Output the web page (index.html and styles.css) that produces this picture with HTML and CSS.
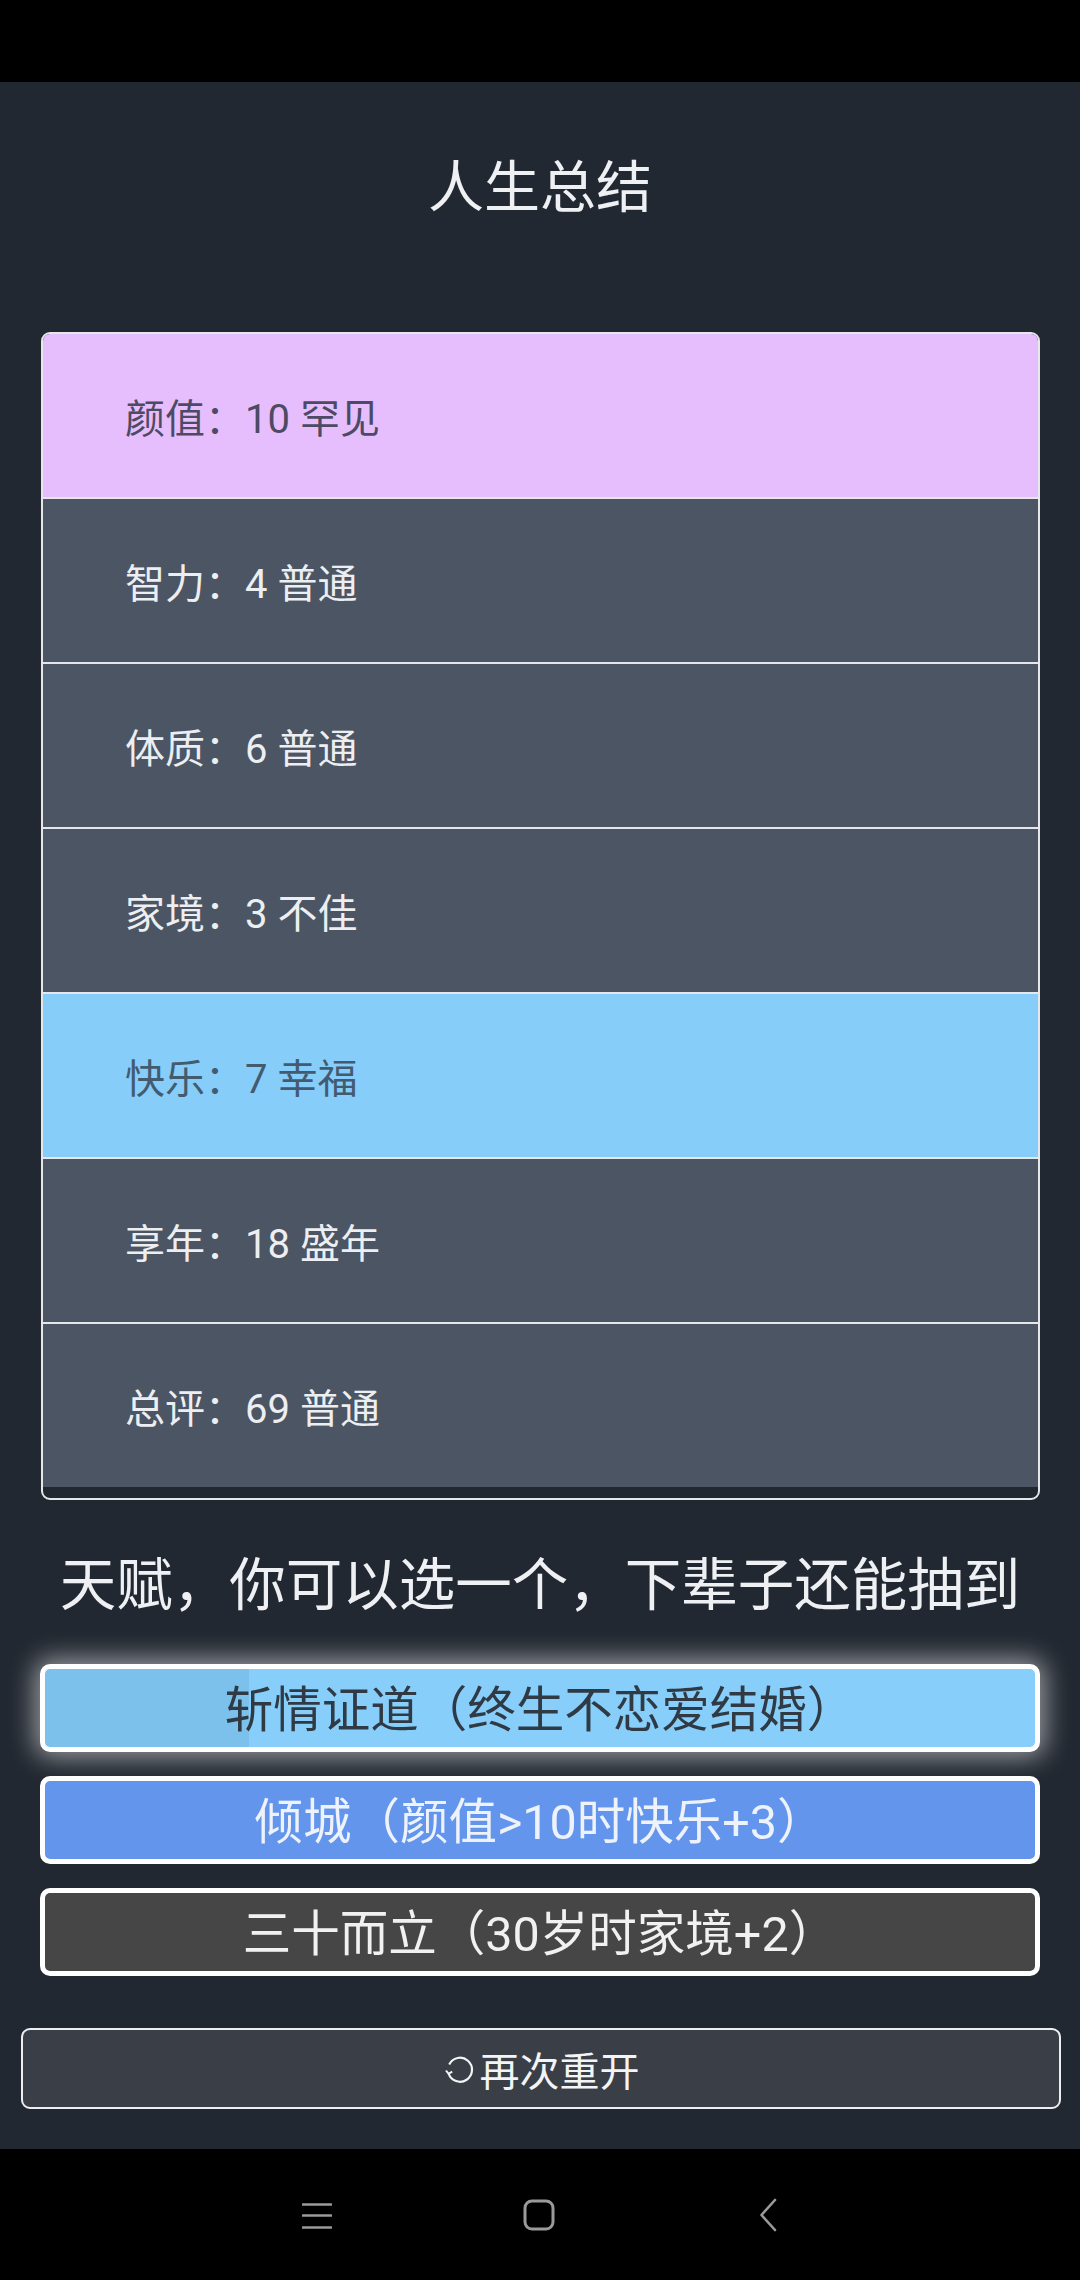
FILE: index.html
```html
<!DOCTYPE html>
<html lang="zh">
<head>
<meta charset="utf-8">
<title>人生总结</title>
<link rel="stylesheet" href="styles.css">
</head>
<body>
<div class="statusbar"></div>
<main class="main">
  <h1 class="title">人生总结</h1>
  <div class="summary">
    <div class="row row-purple">颜值：10 罕见</div>
    <div class="row">智力：4 普通</div>
    <div class="row">体质：6 普通</div>
    <div class="row">家境：3 不佳</div>
    <div class="row row-blue">快乐：7 幸福</div>
    <div class="row">享年：18 盛年</div>
    <div class="row row-last">总评：69 普通</div>
  </div>
  <h2 class="heading">天赋，你可以选一个，下辈子还能抽到</h2>
  <div class="talents">
    <div class="talent talent-sky selected"><span class="progress" style="width:204px"></span><span class="label">斩情证道（终生不恋爱结婚）</span></div>
    <div class="talent talent-cornflower"><span class="label">倾城（颜值&gt;10时快乐+3）</span></div>
    <div class="talent talent-gray"><span class="label">三十而立（30岁时家境+2）</span></div>
  </div>
  <button class="restart"><svg class="restart-icon" width="34" height="34" viewBox="0 0 34 34"><path d="M5.6 20.5 A12 12 0 1 0 6.2 11.5" fill="none" stroke="#f3f4f6" stroke-width="2.2"/><path d="M3 17.5 L5.6 20.8 L9.2 18.6" fill="none" stroke="#f3f4f6" stroke-width="2"/></svg><span>再次重开</span></button>
</main>
<nav class="navbar">
  <svg class="nav-menu" width="30" height="28" viewBox="0 0 30 28"><path d="M1 2.5H29M1 13.5H29M1 25.5H29" stroke="#9a9a9a" stroke-width="2.6" stroke-linecap="round"/></svg>
  <svg class="nav-home" width="32" height="32" viewBox="0 0 32 32"><rect x="2" y="2" width="28" height="28" rx="7" fill="none" stroke="#9a9a9a" stroke-width="3"/></svg>
  <svg class="nav-back" width="18" height="34" viewBox="0 0 18 34"><path d="M16 2 L2.5 17 L16 32" fill="none" stroke="#9a9a9a" stroke-width="2.6" stroke-linecap="round" stroke-linejoin="round"/></svg>
</nav>
</body>
</html>
```
FILE: styles.css
```css
* { box-sizing: border-box; }
html, body { margin: 0; padding: 0; }
body {
  width: 1080px;
  height: 2280px;
  background: #000;
  font-family: "Roboto", "Noto Sans CJK SC", sans-serif;
  overflow: hidden;
}
.statusbar { height: 82px; background: #000; }
.main {
  height: 2067px;
  background: #222831;
  display: flex;
  flex-direction: column;
  padding-top: 78px;
}
.title {
  margin: 0;
  font-size: 56px;
  line-height: 56px;
  font-weight: 400;
  color: #eef0f3;
  text-align: center;
}
.summary {
  margin: 116px 0 0 41px;
  width: 999px;
  border: 2px solid #e5e7eb;
  border-radius: 9px;
  padding-bottom: 11px;
  overflow: hidden;
  display: flex;
  flex-direction: column;
}
.row {
  height: 165px;
  border-bottom: 2px solid #e5e7eb;
  background: #4b5563;
  color: #eceef1;
  font-size: 40px;
  display: flex;
  align-items: center;
  padding-left: 82px;
}
.row-last { height: 163px; border-bottom: none; }
.row-purple { background: #e6befd; color: #4d4a64; }
.row-blue { background: #87cdf9; color: #435b70; }
.heading {
  margin: 58px 0 0;
  font-size: 56.5px;
  line-height: 56px;
  font-weight: 400;
  color: #eef0f3;
  text-align: center;
}
.talents {
  margin: 50px 0 0 40px;
  width: 1000px;
  display: flex;
  flex-direction: column;
  gap: 24px;
}
.talent {
  position: relative;
  height: 88px;
  border: 5px solid #ffffff;
  border-radius: 10px;
  display: flex;
  align-items: center;
  justify-content: center;
  font-size: 48.5px;
  padding-bottom: 4px;
  overflow: hidden;
}
.talent .label { position: relative; }
.talent-sky { background: #87cefa; color: #2f3a44; }
.talent-cornflower { background: #6495ed; color: #eef2fa; }
.talent-gray { background: #464646; color: #f1f1f1; }
.selected { box-shadow: 0 0 26px 5px rgba(255, 255, 255, 0.55); overflow: visible; }
.progress {
  position: absolute;
  left: 0; top: 0; bottom: 0;
  background: rgba(0, 40, 80, 0.08);
  border-radius: 4px 0 0 4px;
}
.restart {
  margin: 52px 0 0 21px;
  width: 1040px;
  height: 81px;
  border: 2px solid #eceef1;
  border-radius: 9px;
  background: #3a3e47;
  color: #f3f4f6;
  font-family: "Roboto", "Noto Sans CJK SC", sans-serif;
  font-size: 40px;
  display: flex;
  align-items: center;
  justify-content: center;
  padding: 0;
}
.restart-icon { margin-right: 3px; margin-top: 2px; }
.navbar {
  height: 131px;
  background: #000;
  display: flex;
  align-items: center;
  padding-left: 302px;
}
.nav-menu { margin-top: 2px; }
.nav-home { margin-left: 191px; }
.nav-back { margin-left: 204px; }
```
